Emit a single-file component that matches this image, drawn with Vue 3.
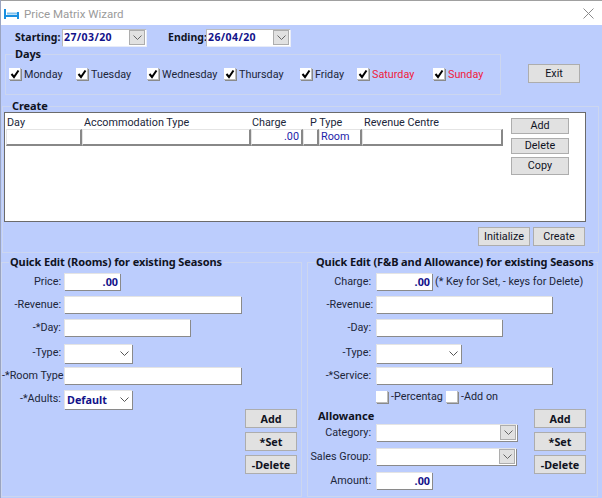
<script setup>
const days = [
  { name: 'Monday', w: 67 },
  { name: 'Tuesday', w: 71 },
  { name: 'Wednesday', w: 77 },
  { name: 'Thursday', w: 76 },
  { name: 'Friday', w: 57 },
  { name: 'Saturday', w: 76, red: true },
  { name: 'Sunday', w: 60, red: true }
]
const columns = [
  { name: 'Day', w: 77 },
  { name: 'Accommodation Type', w: 168 },
  { name: 'Charge', w: 58 },
  { name: 'P Type', w: 54 },
  { name: 'Revenue Centre', w: 140 }
]
</script>

<template>
  <div class="window">
    <header class="titlebar">
      <svg class="bed" width="15" height="10" viewBox="0 0 15 10">
        <path d="M1 0v10M14 3v7M1 7h13" fill="none" stroke="#1a8fe0" stroke-width="2" />
        <path d="M3 4.5h10" fill="none" stroke="#1a8fe0" stroke-width="2" opacity=".55" />
      </svg>
      <span class="title">Price Matrix Wizard</span>
      <svg class="close" width="11" height="11" viewBox="0 0 11 11">
        <path d="M.5.5l10 10M10.5.5l-10 10" stroke="#8a8a8a" stroke-width="1" fill="none" />
      </svg>
    </header>

    <div class="dates">
      <label class="b date-l1">Starting:</label>
      <div class="date"><span>27/03/20</span><i class="drop"><svg width="9" height="5" viewBox="0 0 9 5"><path d="M.5.5l4 4 4-4" fill="none" stroke="#666" /></svg></i></div>
      <label class="b date-l2">Ending:</label>
      <div class="date"><span>26/04/20</span><i class="drop"><svg width="9" height="5" viewBox="0 0 9 5"><path d="M.5.5l4 4 4-4" fill="none" stroke="#666" /></svg></i></div>
    </div>

    <div class="days-row">
      <section class="group days">
        <h3 class="legend">Days</h3>
        <div class="day-list">
          <div v-for="d in days" :key="d.name" class="check" :class="{ red: d.red }" :style="{ width: d.w + 'px' }">
            <span class="box"><svg width="10" height="10" viewBox="0 0 10 10"><path d="M1.5 5l2.5 3 4.5-6.5" fill="none" stroke="#000" stroke-width="2" /></svg></span>
            <span class="check-t">{{ d.name }}</span>
          </div>
        </div>
      </section>
      <button class="btn exit">Exit</button>
    </div>

    <section class="group create">
      <h3 class="legend">Create</h3>
      <div class="sheet">
        <div class="table">
          <div class="thead">
            <span v-for="c in columns" :key="c.name" :style="{ width: c.w + 'px' }">{{ c.name }}</span>
          </div>
          <div class="trow">
            <div class="cell" style="width: 76px"></div>
            <div class="cell" style="width: 169px"></div>
            <div class="cell num" style="width: 52px">.00</div>
            <div class="cell" style="width: 16px"></div>
            <div class="cell blue" style="width: 43px">Room</div>
            <div class="cell" style="width: 141px"></div>
          </div>
        </div>
        <div class="side">
          <button class="btn sm">Add</button>
          <button class="btn sm">Delete</button>
          <button class="btn sm">Copy</button>
        </div>
      </div>
      <div class="create-actions">
        <button class="btn act">Initialize</button>
        <button class="btn act">Create</button>
      </div>
    </section>

    <div class="quick">
      <section class="group q-left">
        <h3 class="legend">Quick Edit (Rooms) for existing Seasons</h3>
        <div class="form f-left">
          <label>Price:</label><div class="in w56 val">.00</div>
          <label>-Revenue:</label><div class="in w177"></div>
          <label>-*Day:</label><div class="in w126"></div>
          <label>-Type:</label><div class="in sel w68"><svg width="9" height="5" viewBox="0 0 9 5"><path d="M.5.5l4 4 4-4" fill="none" stroke="#555" /></svg></div>
          <label>-*Room Type</label><div class="in w177"></div>
          <label>-*Adults:</label><div class="in sel w68 val-l">Default<svg width="9" height="5" viewBox="0 0 9 5"><path d="M.5.5l4 4 4-4" fill="none" stroke="#555" /></svg></div>
        </div>
        <div class="actions a-left">
          <button class="btn bold">Add</button>
          <button class="btn bold">*Set</button>
          <button class="btn bold">-Delete</button>
        </div>
      </section>

      <section class="group q-right">
        <h3 class="legend">Quick Edit (F&amp;B and Allowance) for existing Seasons</h3>
        <div class="form f-right">
          <label>Charge:</label><div class="line"><div class="in w56 val">.00</div><span class="note">(* Key for Set, - keys for Delete)</span></div>
          <label>-Revenue:</label><div class="in w176"></div>
          <label>-Day:</label><div class="in w126"></div>
          <label>-Type:</label><div class="in sel w85"><svg width="9" height="5" viewBox="0 0 9 5"><path d="M.5.5l4 4 4-4" fill="none" stroke="#555" /></svg></div>
          <label>-*Service:</label><div class="in w176"></div>
          <span></span>
          <div class="line checks">
            <span class="box"></span><span class="c1">-Percentag</span>
            <span class="box"></span><span>-Add on</span>
          </div>
        </div>
        <div class="allow">
          <div class="allow-form">
            <h4 class="b allow-t">Allowance</h4>
            <div class="form f-allow">
              <label>Category:</label><div class="in sel combo w141"><i class="drop"><svg width="9" height="5" viewBox="0 0 9 5"><path d="M.5.5l4 4 4-4" fill="none" stroke="#666" /></svg></i></div>
              <label>Sales Group:</label><div class="in sel combo w140"><i class="drop"><svg width="9" height="5" viewBox="0 0 9 5"><path d="M.5.5l4 4 4-4" fill="none" stroke="#666" /></svg></i></div>
              <label>Amount:</label><div class="in w56 val">.00</div>
            </div>
          </div>
          <div class="actions">
            <button class="btn bold">Add</button>
            <button class="btn bold">*Set</button>
            <button class="btn bold">-Delete</button>
          </div>
        </div>
      </section>
    </div>
  </div>
</template>

<style>
html, body { margin: 0; background: #bccdfd; }
</style>

<style scoped>
.window {
  width: 602px; height: 498px; overflow: hidden; box-sizing: border-box;
  background: #bccdfd; border-left: 1px solid #9aa4c0;
  font: 10.8px/14px Roboto, "Liberation Sans", sans-serif; color: #20263a;
}
.titlebar {
  height: 25px; box-sizing: border-box; background: #fff; display: flex; align-items: center;
  border-top: 1px solid #a0a0a0; padding: 1px 8px 0 3px;
}
.bed { flex: none; }
.title { margin-left: 5px; font-size: 11.5px; color: #9a9a9a; flex: 1; }
.b { font-weight: 700; color: #10131f; }

.dates { display: flex; align-items: center; height: 18px; margin-top: 3px; padding-left: 14px; font-family: "Noto Sans", sans-serif; font-size: 10.5px; }
.date-l1 { width: 47px; white-space: nowrap; }
.date-l2 { width: 38px; margin-left: 22px; white-space: nowrap; }
.date {
  width: 84px; height: 17px; box-sizing: border-box; background: #fff; display: flex; align-items: center;
  justify-content: space-between; font-weight: 700; color: #12128a; padding: 0 1px 0 2px; letter-spacing: .4px;
  box-shadow: inset 1px 1px #bbb, 1px 1px #e8ecf8;
}
.drop {
  display: flex; align-items: center; justify-content: center; width: 16px; height: 15px; background: #e1e1e1;
  box-shadow: inset 0 0 0 1px #adadad;
}

.group { box-sizing: border-box; border: 1px solid #ccd6ef; }
.legend {
  margin: -8px 0 0 8px; height: 14px; font: 11px/14px "Noto Sans", sans-serif; font-weight: 700; color: #10131f;
  width: max-content; padding: 0 1px; background: #bccdfd; letter-spacing: -.1px;
}

.days-row { display: flex; align-items: flex-start; margin-top: 8px; padding-left: 4px; }
.days { width: 496px; height: 41px; }
.day-list { display: flex; margin-top: 6px; padding-left: 3px; }
.check { display: flex; align-items: center; gap: 3px; height: 14px; }
.check-t { line-height: 16px; height: 14px; }
.check.red { color: #f0203c; }
.box {
  flex: none; width: 12px; height: 12px; box-sizing: border-box; background: #fff; display: flex; align-items: center; justify-content: center;
  box-shadow: inset -1px -1px #bbb, 1px 1px #8a8a8a;
}
.btn {
  padding: 0; font: inherit; color: #10131f; background: #e1e1e1; border: 1px solid #adadad; box-sizing: border-box;
}
.exit { width: 52px; height: 19px; margin: 10px 0 0 27px; }

.create { height: 147px; margin: 11px 0 0 1px; width: 597px; padding: 0 0 0 1px; }
.create .legend { margin-left: 7px; margin-bottom: -1px; }
.sheet {
  width: 582px; height: 110px; box-sizing: border-box; background: #fff; border: 1px solid #6b6b6b; display: flex;
}
.table { width: 500px; padding-left: 1px; }
.thead { display: flex; height: 16px; padding: 3px 0 0 1px; box-sizing: border-box; }
.thead span { flex: none; }
.trow { display: flex; height: 17px; }
.cell {
  flex: none; box-sizing: border-box; height: 17px; border: 1px solid #e4e4e4; border-right: 2px solid #888; border-bottom: 2px solid #888;
  padding: 0 2px; line-height: 14px; color: #1d1daa;
}
.cell.num { text-align: right; }
.cell.blue { padding-left: 1px; }
.side { display: flex; flex-direction: column; margin: 5px 0 0 5px; }
.sm { width: 58px; height: 16px; margin-bottom: 4px; }
.sm:last-child { height: 18px; margin-top: -1px; }
.create-actions { display: flex; justify-content: flex-end; gap: 3px; margin: 5px 13px 0 0; }
.act { width: 52px; height: 19px; }

.quick { display: flex; margin-top: 9px; gap: 5px; }
.q-left { width: 301px; height: 235px; }
.q-right { width: 291px; height: 235px; }
.quick .legend { margin-left: 7px; }

.form { display: grid; column-gap: 3px; align-items: start; }
.form > label { text-align: right; line-height: 18px; height: 17px; white-space: nowrap; }
.f-left { grid-template-columns: 59px 1fr; grid-template-rows: 23px 23px 25px 23px 23px 19px; margin-top: 4px; }
.f-right { grid-template-columns: 65px 1fr; grid-template-rows: 23px 23px 25px 23px 23px 19px; margin-top: 4px; }
.f-right > label:nth-of-type(1), .f-right > label:nth-of-type(3), .f-right > label:nth-of-type(4), .f-right > label:nth-of-type(5) { padding-right: 2px; }
.f-allow > label { padding-right: 2px; }
.f-allow { grid-template-columns: 65px 1fr; grid-template-rows: 24px 24px 20px; }
.in {
  height: 17px; box-sizing: border-box; background: #fff; display: flex; align-items: center; padding: 0 2px;
  box-shadow: inset 1px 1px #e4e4e4, 1px 1px #8a8a8a;
  font-family: "Noto Sans", sans-serif; font-weight: 700; color: #12128a;
}
.val { justify-content: flex-end; }
.sel { height: 19px; justify-content: flex-end; padding-right: 3px; }
.val-l { justify-content: space-between; padding-left: 3px; }
.combo { height: 17px; padding-right: 1px; }
.w56 { width: 56px; }
.w68 { width: 68px; }
.w85 { width: 85px; }
.w126 { width: 126px; }
.w140 { width: 140px; }
.w141 { width: 141px; }
.w176 { width: 176px; }
.w177 { width: 177px; }
.line { display: flex; align-items: center; height: 17px; white-space: nowrap; }
.note { margin-left: 3px; }
.checks { height: 12px; gap: 3px; margin-top: 1px; }
.c1 { width: 52px; }
.actions { display: flex; flex-direction: column; gap: 4px; }
.a-left { margin: 0 0 0 243px; }
.actions .btn { width: 52px; height: 19px; font-family: "Noto Sans", sans-serif; }
.bold { font-weight: 700; }
.allow { display: flex; height: 80px; }
.allow-form { width: 226px; }
.allow-t { margin: 0 0 0 10px; height: 15px; font: 11px/14px "Noto Sans", sans-serif; font-weight: 700; }
</style>
